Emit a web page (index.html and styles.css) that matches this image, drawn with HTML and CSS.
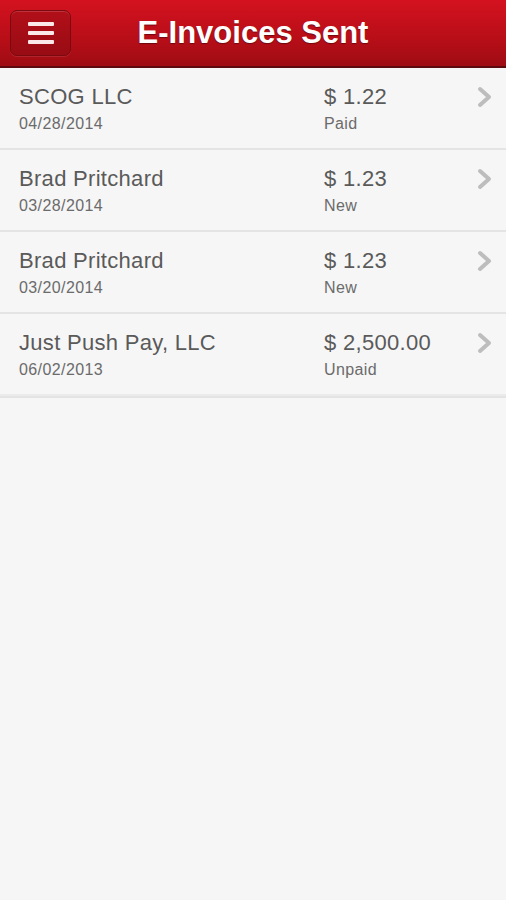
FILE: index.html
```html
<!DOCTYPE html>
<html lang="en">
<head>
  <meta charset="UTF-8">
  <title>E-Invoices Sent</title>
  <link rel="stylesheet" href="styles.css">
</head>
<body>

  <!-- Top bar -->
  <header class="topbar">
    <button class="menu-btn" aria-label="Menu">
      <span></span><span></span><span></span>
    </button>
    <h1>E-Invoices Sent</h1>
  </header>

  <!-- Invoice list -->
  <ul class="invoices">
    <li class="invoice">
      <div class="who">
        <div class="name">SCOG LLC</div>
        <div class="date">04/28/2014</div>
      </div>
      <div class="money">
        <div class="amount">$ 1.22</div>
        <div class="status">Paid</div>
      </div>
      <svg class="chev" viewBox="0 0 18 22"><path d="M4 3 L13 11 L4 19" /></svg>
    </li>
    <li class="invoice">
      <div class="who">
        <div class="name">Brad Pritchard</div>
        <div class="date">03/28/2014</div>
      </div>
      <div class="money">
        <div class="amount">$ 1.23</div>
        <div class="status">New</div>
      </div>
      <svg class="chev" viewBox="0 0 18 22"><path d="M4 3 L13 11 L4 19" /></svg>
    </li>
    <li class="invoice">
      <div class="who">
        <div class="name">Brad Pritchard</div>
        <div class="date">03/20/2014</div>
      </div>
      <div class="money">
        <div class="amount">$ 1.23</div>
        <div class="status">New</div>
      </div>
      <svg class="chev" viewBox="0 0 18 22"><path d="M4 3 L13 11 L4 19" /></svg>
    </li>
    <li class="invoice">
      <div class="who">
        <div class="name">Just Push Pay, LLC</div>
        <div class="date">06/02/2013</div>
      </div>
      <div class="money">
        <div class="amount">$ 2,500.00</div>
        <div class="status">Unpaid</div>
      </div>
      <svg class="chev" viewBox="0 0 18 22"><path d="M4 3 L13 11 L4 19" /></svg>
    </li>
  </ul>

</body>
</html>
```

FILE: styles.css
```css
/* Page base */
body {
  margin: 0;
  background-color: #f6f6f6;
  font-family: "Liberation Sans", Arial, sans-serif;
  color: #555;
}

/* Red header bar */
.topbar {
  height: 66px;
  display: flex;
  align-items: center;
  justify-content: center;
  position: relative;
  background: linear-gradient(#d4121f, #b70e18 60%, #9e0c13);
  border-bottom: 2px solid #5c0a0e;
}

.topbar h1 {
  margin: 0;
  color: #fff;
  font-size: 31px;
  font-weight: bold;
  letter-spacing: 0;
  text-shadow: 0 1px 1px rgba(0, 0, 0, 0.4);
}

/* Menu button sits over the bar, left side */
.menu-btn {
  position: absolute;
  left: 10px;
  top: 10px;
  width: 61px;
  height: 46px;
  padding: 0;
  border: 1px solid #7a0a10;
  border-radius: 7px;
  background: linear-gradient(#b20f19, #980c13);
  box-shadow: inset 0 1px 0 rgba(255, 255, 255, 0.15), 0 1px 0 rgba(255, 255, 255, 0.1);
  display: flex;
  flex-direction: column;
  align-items: center;
  justify-content: center;
  gap: 5px;
}

.menu-btn span {
  display: block;
  width: 26px;
  height: 4px;
  border-radius: 1px;
  background-color: #fbe9ea;
}

/* List */
.invoices {
  list-style: none;
  margin: 0;
  padding: 0;
  border-bottom: 2px solid #e4e4e4;
}

.invoice {
  height: 80px;
  display: flex;
  align-items: flex-start;
  padding: 0 0 0 19px;
  border-bottom: 2px solid #e4e4e4;
}

.invoice:last-child {
  border-bottom: 2px solid #ebebeb;
}

.who {
  width: 305px;
  padding-top: 15px;
}

.money {
  flex: 1;
  padding-top: 15px;
}

.name,
.amount {
  font-size: 22px;
  line-height: 28px;
  letter-spacing: 0.3px;
  color: #5a5a5a;
}

.date,
.status {
  margin-top: 3px;
  font-size: 16px;
  line-height: 20px;
  letter-spacing: 0.4px;
  color: #6b6b6b;
}

/* Chevron on the right */
.chev {
  width: 18px;
  height: 22px;
  margin: 18px 12px 0 0;
}

.chev path {
  fill: none;
  stroke: #bdbdbd;
  stroke-width: 4;
  stroke-linecap: round;
  stroke-linejoin: round;
}
```
